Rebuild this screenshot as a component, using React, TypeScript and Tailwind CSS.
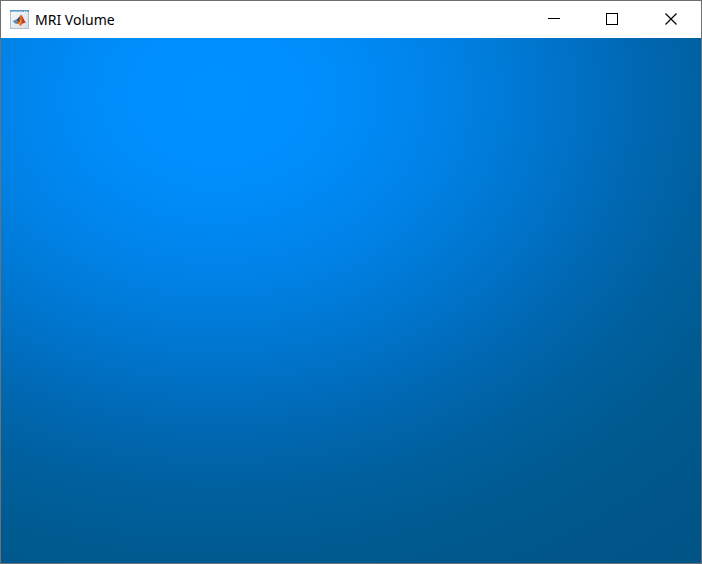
import type { ReactNode } from "react";

function FigureIcon() {
  return (
    <svg width="20" height="20" viewBox="0 0 20 20" aria-hidden="true" className="shrink-0">
      <defs>
        <linearGradient id="paper" x1="0" y1="0" x2="1" y2="1">
          <stop offset="0" stopColor="#f8fafb" />
          <stop offset="1" stopColor="#d6dee6" />
        </linearGradient>
        <linearGradient id="peak" x1="0" y1="0" x2="1" y2="0">
          <stop offset="0" stopColor="#8a2a1c" />
          <stop offset="0.4" stopColor="#e0561c" />
          <stop offset="0.65" stopColor="#c8371a" />
          <stop offset="1" stopColor="#a5260f" />
        </linearGradient>
      </defs>
      <rect x="0.5" y="0.5" width="18" height="18" fill="url(#paper)" stroke="#b3c0cc" />
      <rect x="0" y="0" width="19" height="2" fill="#5f9dc4" />
      <rect x="1" y="1" width="12" height="1" fill="#8fc0dc" />
      <path d="M14 1h1v1h-1zM16 1h1v1h-1z" fill="#d8ecf6" />
      <g transform="translate(0.2 0.8) scale(0.93 0.88)">
        <path d="M2.500 12 6.500 10l2 2-3 2.300z" fill="#4a91bd" />
        <path d="M6.500 10c2-.5 3-3.500 5-5L9.500 12l-2.500 2.500-1.500-.2 3-2.300z" fill="#243f66" />
        <path d="M11.500 4.500c1.800 0 3 6.500 5.700 9.500-2-.9-3.700 0-6.200 3.500-.8-2-2-3.200-4-3 2.500-1.500 3-7 4.500-10z" fill="url(#peak)" />
        <path d="M11.500 5c-1.200 3-1 7-3.500 9.500 1.500.3 2.500 1.500 3 2.800 1.500-3 2-8 .5-12.300z" fill="#f58b2a" />
        <path d="M11.300 6c-.8 2-1 5-2.500 7.500 1.500-1 2.500-4 2.500-7.500z" fill="#8a2a1c" />
      </g>
    </svg>
  );
}

function CaptionButton({ label, children }: { label: string; children: ReactNode }) {
  return (
    <button type="button" aria-label={label} className="flex w-[59px] items-center justify-center text-black hover:bg-gray-200">
      <svg width="13" height="13" viewBox="0 0 13 13" fill="none" stroke="currentColor" aria-hidden="true">
        {children}
      </svg>
    </button>
  );
}

export default function App() {
  return (
    <div className="flex min-h-screen flex-col border border-[#707070] bg-white font-['Noto_Sans','Open_Sans',sans-serif]">
      <header className="flex h-[37px] items-stretch justify-between">
        <div className="flex items-center gap-[5px] pl-[9px]">
          <FigureIcon />
          <h1 className="text-sm leading-5 text-black">MRI Volume</h1>
        </div>
        <div className="flex">
          <CaptionButton label="Minimize">
            <path d="M1 5.500h12" shapeRendering="crispEdges" />
          </CaptionButton>
          <CaptionButton label="Maximize">
            <path d="M.5.5h11v11H.5z" shapeRendering="crispEdges" />
          </CaptionButton>
          <CaptionButton label="Close">
            <path d="M.5.5l11 11M11.500.5l-11 11" strokeWidth="1.200" />
          </CaptionButton>
        </div>
      </header>
      <main
        aria-label="Volume view"
        className="flex-1 bg-[radial-gradient(ellipse_102%_108%_at_31%_11%,#0090ff_0%,#008ffe_11%,#008af5_21%,#0082e6_32%,#0079d4_42%,#0070c3_51%,#0067b0_60%,#00609e_70%,#005b92_80%,#00578b_90%,#005385_110%)]"
      />
    </div>
  );
}
